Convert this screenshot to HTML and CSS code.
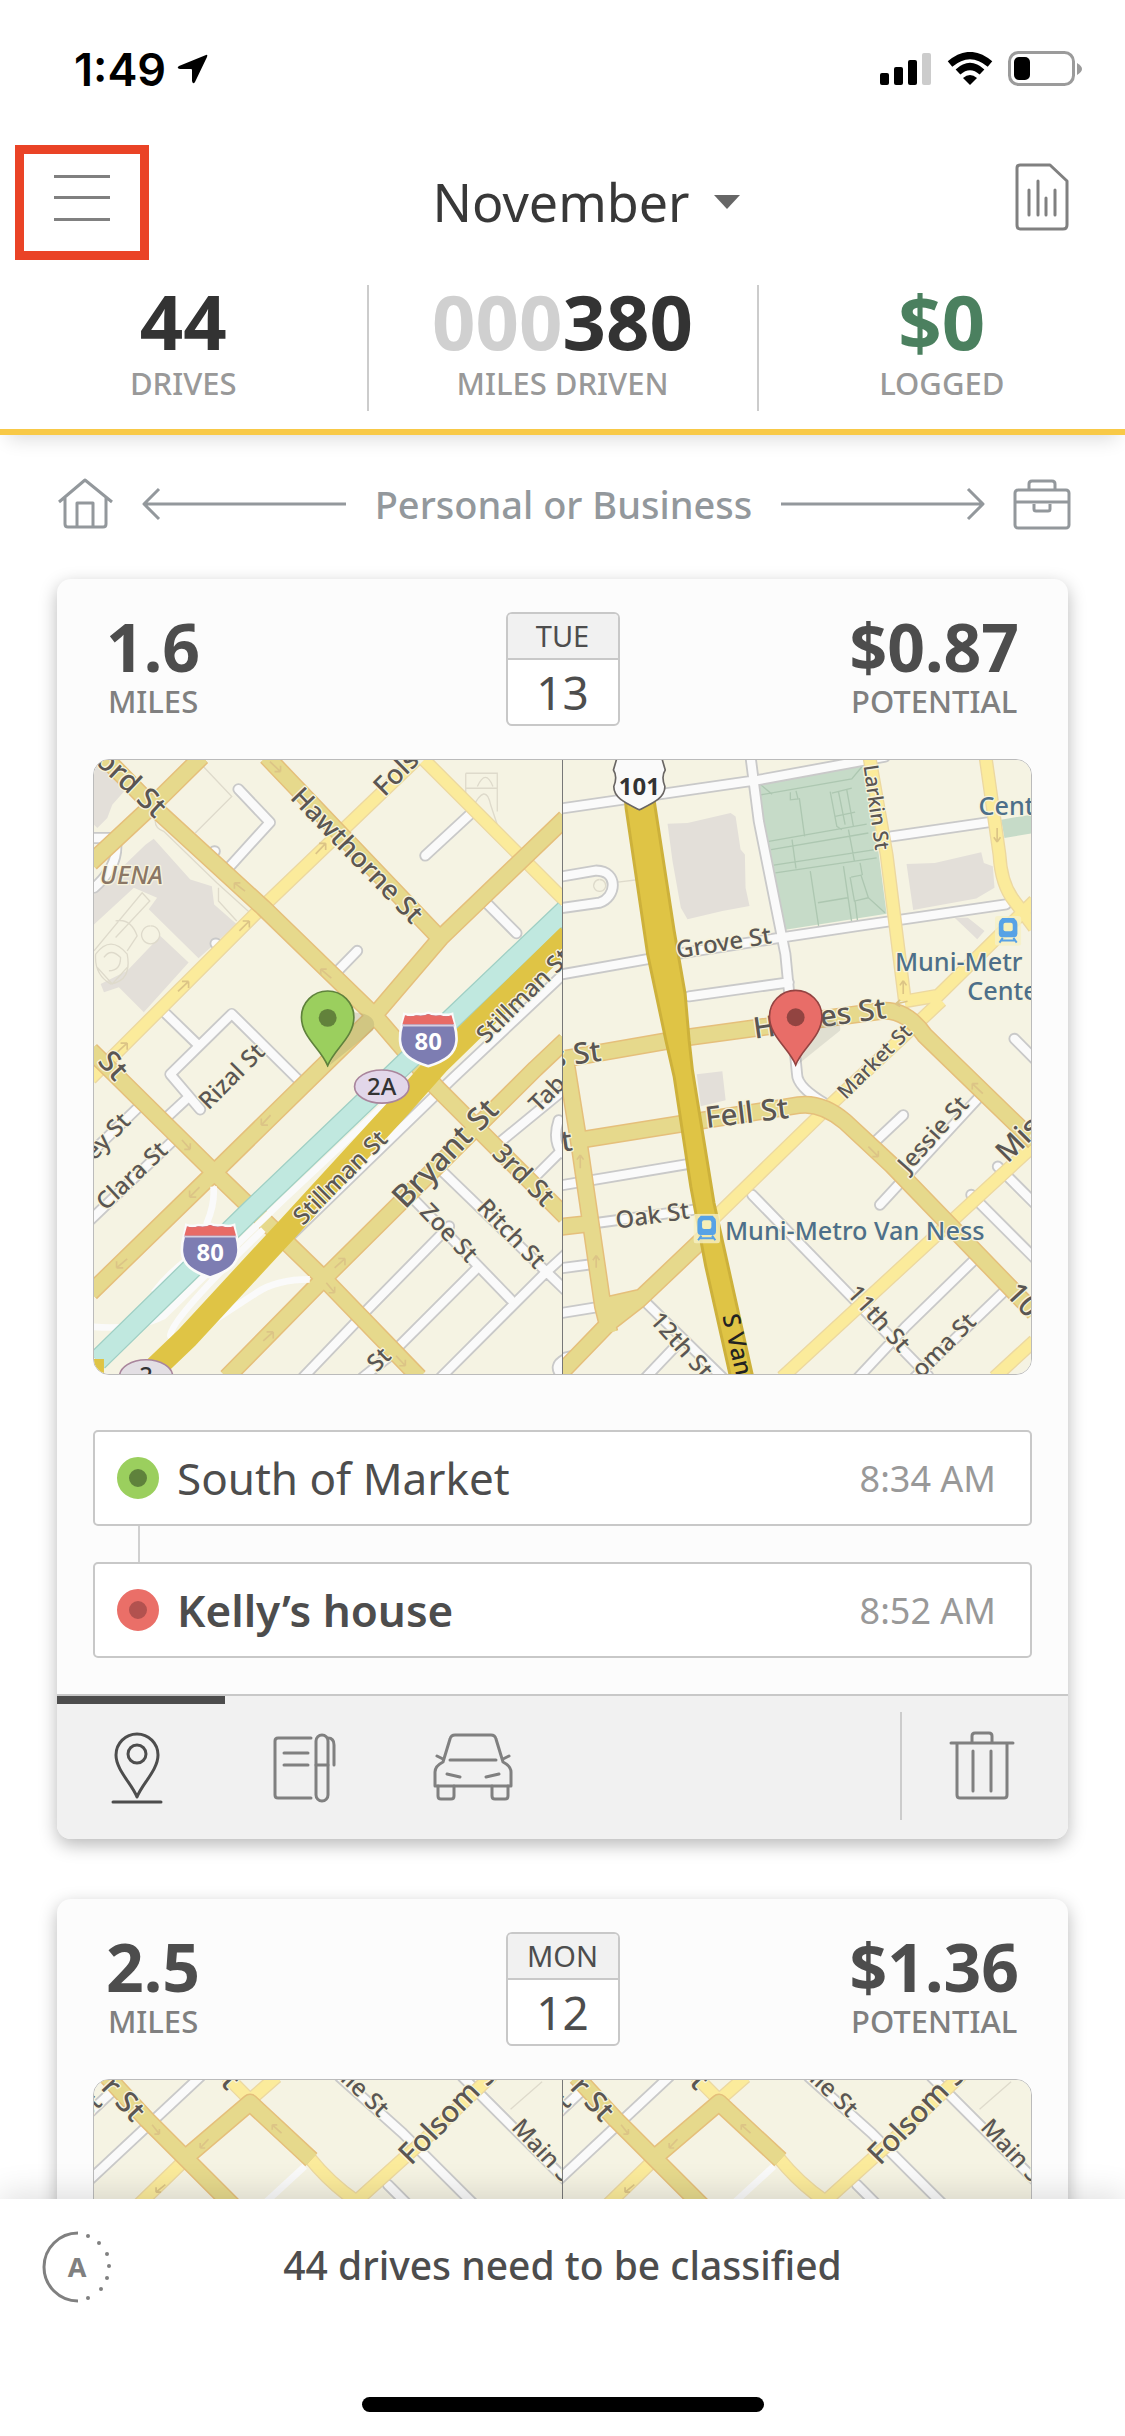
FILE: index.html
```html
<!DOCTYPE html>
<html lang="en">
<head>
    <meta charset="UTF-8">
    <meta name="viewport" content="width=device-width, initial-scale=1.0">
    <title>Drives - November</title>
    <link rel="stylesheet" href="styles.css">
</head>
<body>
    <!-- Shared map artwork -->
    <svg class="defs" aria-hidden="true">
        <defs>
            <symbol id="interstate" viewBox="0 0 180 170">
                <path d="M18 8 Q36 14 54 8 Q74 12 90 4 Q106 12 126 8 Q144 14 162 8 C166 40 178 56 175 90 C172 130 140 150 90 166 C40 150 8 130 5 90 C2 56 14 40 18 8Z" fill="#7d7db2" stroke="#fafafa" stroke-width="8"/>
                <path d="M20 12 Q36 18 54 12 Q74 16 90 8 Q106 16 126 12 Q144 18 160 12 L168 40 H12Z" fill="#e86b66"/>
                <path d="M11 43 H169" stroke="#d6cfe0" stroke-width="6"/>
                <text x="90" y="117" class="shield-text shield-white">80</text>
            </symbol>
            <symbol id="train" viewBox="0 0 80 90">
                <rect x="0" y="0" width="80" height="90" rx="10" fill="#f6f0c4" opacity="0.8"/>
                <path d="M22 6 H58 Q68 14 68 24 V52 Q68 64 58 64 H22 Q12 64 12 52 V24 Q12 14 22 6Z" fill="#57a2e6"/>
                <rect x="26" y="20" width="28" height="26" rx="6" fill="#f6efb8"/>
                <path d="M24 66 L14 80 M56 66 L66 80 M18 74 H62" stroke="#57a2e6" stroke-width="6"/>
            </symbol>
            <symbol id="map-pin" viewBox="0 0 170 236">
                <path d="M85 231 C65 180 6 145 6 85 A79 79 0 0 1 164 85 C164 145 105 180 85 231Z" stroke-width="5"/>
                <circle cx="85" cy="87" r="27" class="pin-dot"/>
            </symbol>

            <!-- Roads, each drawn twice: casing then fill -->
            <path id="start-minor" d="M445 103 L540 203 L420 335 M1008 303 L1150 172 M1195 448 L1283 537 M730 665 L803 590 M372 290 h2 M376 568 h2 M215 768 L318 868 M330 1068 L240 962 L425 780 L625 978 M290 1035 L220 1100 M150 1055 L0 1200 M250 1160 L0 1400 M1430 655 L1090 975 L600 1450 M1430 1005 L1235 1165 M1430 1180 L1345 1265 M1410 1100 Q1390 1160 1420 1200 M1060 1255 L1430 1612 M970 1335 L1265 1640 M1430 1505 L1370 1560 L1055 1875 M1160 1550 L920 1790 M1080 1420 L825 1680 M800 1708 L640 1875 M920 1795 L820 1875 M1430 1820 q-40 20 -10 50 M0 250 H75 Q90 330 10 400"/>
            <path id="start-street" d="M0 975 L515 460 L980 15 M1005 15 L1430 440"/>
            <path id="start-avenue" d="M335 5 L190 148 L0 325 M40 5 L190 158 L520 460 L860 790 L1040 1000 L1430 1390 M530 5 L1050 550 M1430 190 L1055 550 L850 790 L370 1260 L0 1620 M0 890 L370 1255 L700 1575 L990 1875 M1430 860 L1340 945 L700 1580 L410 1875"/>
            <path id="end-minor" d="M0 162 L600 75 L980 5 M575 5 L600 200 L680 600 L715 960 Q715 1000 800 1050 M0 367 L110 348 C180 350 170 430 120 445 L0 462 M0 662 L350 600 L680 548 L900 515 L1345 450 M390 727 L690 685 M1000 245 L1310 200 M1370 855 L1430 915 M1035 1085 L945 1170 M1260 1035 L965 1355 M0 1297 L400 1230 M110 1410 L440 1365 M0 1547 L90 1535 M0 1682 L105 1665 M580 1325 L1110 1870 M250 1640 L490 1875 M350 1780 L260 1875 M1245 1525 L1040 1725 L900 1875 M1335 1620 L1070 1875 M1240 1325 L1430 1515 M1320 1240 L1430 1350 M0 1820 L40 1810"/>
            <path id="end-street" d="M933 5 L985 300 L1040 740 M1283 5 L1325 300 Q1330 390 1370 440 L1430 520 M1430 440 L1140 725 L1040 742 M1150 740 L820 1050 L450 1410 M1430 1175 L670 1875 M1430 1765 L1310 1875"/>
            <path id="end-avenue" d="M0 918 L390 850 L960 772 Q1040 760 1100 845 L1430 1165 M15 900 L60 1180 L130 1660 L150 1740 M50 1162 L450 1098 L720 1055 Q790 1045 860 1105 L1000 1235 L1430 1680 M0 1865 L150 1710 L240 1640 L440 1450 M130 1660 L240 1635 M0 1422 L90 1412"/>
            <path id="folsom-minor" d="M330 20 L0 328 M750 20 L940 190 L1180 430 M1120 20 L1430 330 M895 345 L990 440 M0 125 L80 50"/>
            <path id="folsom-street" d="M410 20 L480 90 L560 20 M300 255 L130 420 M660 265 Q720 340 800 395 L1000 215 L1210 15"/>
            <path id="folsom-avenue" d="M50 20 L170 150 L430 410 M290 260 L480 98 L665 270"/>

            <g id="folsom">
                <path class="ground" d="M0 0H1430V1900H0Z"/>
                <path class="detail" d="M1360 35 L1265 118"/>
                <use href="#folsom-minor" class="minor"/>
                <use href="#folsom-minor" class="fill-minor"/>
                <path class="ramp" d="M645 290 L520 405"/>
                <use href="#folsom-street" class="street"/>
                <use href="#folsom-street" class="fill-street"/>
                <use href="#folsom-avenue" class="avenue"/>
                <use href="#folsom-avenue" class="fill-avenue"/>
                <path class="arrows" d="M185 165 L207 193 M207 193 v-15 M207 193 h-15 M355 208 L330 235 M330 235 v-15 M330 235 h15 M575 190 L547 165 M547 165 v15 M547 165 h15 M225 345 L197 368 M197 368 v-15 M197 368 h15"/>
                <g class="labels">
                    <text class="big" transform="translate(28 55) rotate(47)">r St</text>
                    <text class="big" transform="translate(388 40) rotate(47)">t</text>
                    <text transform="translate(750 30) rotate(44)">lie St</text>
                    <text class="big" transform="translate(965 290) rotate(-46)">Folsom S</text>
                    <text transform="translate(1265 175) rotate(47)">Main St</text>
                    <text transform="translate(-10 150) rotate(-45)">St</text>
                </g>
            </g>
        </defs>
    </svg>

    <div class="app">
        <header class="header">
            <div class="status-bar">
                <div class="clock">
                    <span>1:49</span>
                    <svg width="32" height="32" viewBox="0 0 32 32"><path d="M30 2 Q32 1 31 4 L19 29 Q17 32 16 28 V17 Q16 16 15 16 H4 Q0 15 3 13Z"/></svg>
                </div>
                <div class="status-icons">
                    <svg width="52" height="34" viewBox="0 0 52 34">
                        <rect x="0" y="21" width="9" height="12" rx="2"/>
                        <rect x="14" y="15" width="9" height="18" rx="2"/>
                        <rect x="28" y="8" width="9" height="25" rx="2"/>
                        <rect x="42" y="1" width="9" height="32" rx="2" fill="#cccccc"/>
                    </svg>
                    <svg width="46" height="34" viewBox="0 0 46 34">
                        <path d="M23 33 L16 26 Q23 20 30 26Z"/>
                        <path d="M11 20 Q23 9 35 20 M3 12 Q23 -5 43 12" fill="none" stroke="#000" stroke-width="7"/>
                    </svg>
                    <svg width="74" height="36" viewBox="0 0 74 36">
                        <rect x="1.5" y="1.5" width="64" height="32" rx="9" fill="none" stroke="#9b9b9b" stroke-width="3"/>
                        <rect x="6" y="6" width="16" height="23" rx="5"/>
                        <path d="M69 12 Q74 15 74 18 Q74 21 69 24Z" fill="#9b9b9b"/>
                    </svg>
                </div>
            </div>

            <div class="title-bar">
                <button class="menu-button" aria-label="Menu">
                    <svg width="56" height="46" viewBox="0 0 56 46"><path d="M0 1.5 H56 M0 22.5 H56 M0 44.5 H56" stroke="#808080" stroke-width="3"/></svg>
                </button>
                <button class="month-button">
                    November
                    <svg width="26" height="14" viewBox="0 0 26 14"><path d="M0 0 H26 L13 14Z" fill="#666666"/></svg>
                </button>
                <button class="report-button" aria-label="Report">
                    <svg width="54" height="68" viewBox="0 0 54 68" fill="none" stroke="#808080" stroke-width="3">
                        <path d="M5 2 H35 L52 18 V62 Q52 66 48 66 H5 Q2 66 2 62 V5 Q2 2 5 2Z" stroke-linejoin="round"/>
                        <path d="M14 27 V52 M23 18 V52 M31 35 V52 M40 27 V52" stroke-linecap="round"/>
                    </svg>
                </button>
            </div>

            <div class="stats">
                <div class="stat">
                    <div class="stat-value">44</div>
                    <div class="stat-label">DRIVES</div>
                </div>
                <div class="stat stat-miles">
                    <div class="stat-value"><span class="zeros">000</span>380</div>
                    <div class="stat-label">MILES DRIVEN</div>
                </div>
                <div class="stat">
                    <div class="stat-value logged">$0</div>
                    <div class="stat-label">LOGGED</div>
                </div>
            </div>
        </header>

        <main class="feed">
            <div class="swipe-hint">
                <svg width="57" height="52" viewBox="0 0 57 52">
                    <path d="M2 24 L28 2 L55 24 M8 20 V46 Q8 49 11 49 H46 Q49 49 49 46 V20 M20 49 V25 H36 V49"/>
                </svg>
                <svg width="205" height="34" viewBox="0 0 205 34"><path d="M17 2 L2 17 L17 32 M2 17 H204"/></svg>
                <span>Personal or Business</span>
                <svg width="205" height="34" viewBox="0 0 205 34"><path d="M188 2 L203 17 L188 32 M203 17 H1"/></svg>
                <svg width="58" height="52" viewBox="0 0 58 52">
                    <rect x="2" y="12" width="54" height="38" rx="3"/>
                    <path d="M16 12 V6 Q16 3 19 3 H39 Q42 3 42 6 V12 M3 24 H55 M21 26 V31 Q21 33 23 33 H35 Q37 33 37 31 V26"/>
                </svg>
            </div>

            <article class="card">
                <div class="card-body">
                    <div class="summary">
                        <div class="figure">
                            <div class="figure-value">1.6</div>
                            <div class="figure-label">MILES</div>
                        </div>
                        <div class="date">
                            <div class="weekday">TUE</div>
                            <div class="day">13</div>
                        </div>
                        <div class="figure figure-right">
                            <div class="figure-value">$0.87</div>
                            <div class="figure-label">POTENTIAL</div>
                        </div>
                    </div>

                    <div class="maps">
                        <svg class="map" viewBox="10 15 1410 1850">
                            <path class="ground" d="M0 0H1430V1880H0Z"/>
                            <path class="building" d="M0 20 L60 35 L105 105 L65 150 L50 190 L20 220 L0 200Z M0 430 L165 270 L190 252 L215 280 L300 375 L365 395 L372 450 L440 510 L325 612 L175 465 L200 430 L130 400 L0 520Z M210 545 L295 625 L160 775 L85 700 L40 715 L30 690 L110 650Z"/>
                            <path class="detail" d="M330 25 L425 125 L315 235 M195 190 Q190 220 220 230 L380 385 L480 475 M385 400 V440 L440 500 M1130 55 H1225 V170 M1130 55 V140 M1130 100 H1225 M1165 95 Q1190 40 1212 95 M1150 160 Q1190 80 1205 150 L1225 210 M10 590 L155 415 L178 440 L75 550 M75 500 Q120 490 140 545 L110 590 M15 600 Q60 540 110 600 Q125 680 60 690 Q10 660 15 600 M40 610 Q60 580 90 610 Q90 650 55 650 M20 640 L65 690 L110 640 M180 515 a27 27 0 1 0 1 0"/>
                            <use href="#start-minor" class="minor"/>
                            <use href="#start-minor" class="fill-minor"/>
                            <use href="#start-street" class="street"/>
                            <use href="#start-street" class="fill-street"/>
                            <use href="#start-avenue" class="avenue"/>
                            <use href="#start-avenue" class="fill-avenue"/>
                            <path class="ramp" d="M370 1300 Q375 1350 350 1410 L350 1480 Q250 1540 190 1620 M0 1722 Q130 1735 220 1690 L580 1340 L900 1040 M660 1580 Q560 1580 500 1620 L300 1750 Q250 1770 240 1750 Q240 1700 520 1430"/>
                            <path d="M1430 468 L930 945 L480 1375 L20 1825" fill="none" stroke="#9fcfc4" stroke-width="66"/>
                            <path d="M1430 468 L930 945 L480 1375 L20 1825" fill="none" stroke="#c0e8df" stroke-width="58"/>
                            <path d="M1440 545 L1045 930 L930 1060 L600 1420 L290 1755 L170 1870 M0 1855 H40" fill="none" stroke="#dfc445" stroke-width="70"/>
                            <path class="arrows" d="M678 298 L708 266 M708 266 h-20 M708 266 v20 M448 530 L478 500 M478 500 h-20 M478 500 v20 M263 712 L295 682 M295 682 h-20 M295 682 v20 M80 895 L110 868 M110 868 h-20 M110 868 v20 M465 410 L433 385 M433 385 h18 M433 385 v18 M725 672 L693 645 M693 645 h18 M693 645 v18 M540 20 L572 50 M572 50 h-18 M572 50 v-18 M542 1085 L514 1115 M514 1115 v-20 M514 1115 h20 M328 1302 L298 1332 M298 1332 v-20 M298 1332 h20 M110 1518 L78 1545 M78 1545 v-20 M78 1545 h20 M275 1160 L300 1188 M300 1188 v-18 M300 1188 h-18 M735 1545 L766 1517 M766 1517 h-20 M766 1517 v20 M520 1765 L550 1738 M550 1738 h-20 M550 1738 v20 M710 1590 L735 1620 M735 1620 v-18 M735 1620 h-18 M920 1810 L948 1840 M948 1840 v-18 M948 1840 h-18"/>
                            <path d="M720 935 L850 830 Q870 780 790 775Z" fill="#8a8460" opacity="0.22"/>
                            <g class="labels">
                                <text class="big" transform="translate(10 22) rotate(43)">ord St</text>
                                <text class="mid" transform="translate(598 130) rotate(46)">Hawthorne St</text>
                                <text class="mid" transform="translate(885 128) rotate(-45)">Folsom</text>
                                <text x="218" y="388" class="place" text-anchor="end">UENA</text>
                                <text class="big" transform="translate(18 925) rotate(48)">St</text>
                                <text transform="translate(355 1072) rotate(-45)">Rizal St</text>
                                <text transform="translate(10 1225) rotate(-46)">ey St</text>
                                <text transform="translate(45 1375) rotate(-43)">Clara St</text>
                                <text transform="translate(640 1420) rotate(-45)">Stillman St</text>
                                <text transform="translate(1192 872) rotate(-45)">Stillman St</text>
                                <text class="huge" transform="translate(948 1370) rotate(-46)">Bryant St</text>
                                <text class="mid" transform="translate(1205 1205) rotate(45)">3rd St</text>
                                <text transform="translate(1160 1366) rotate(46)">Ritch St</text>
                                <text transform="translate(988 1380) rotate(46)">Zoe St</text>
                                <text transform="translate(1350 1080) rotate(-45)">Tab</text>
                                <text transform="translate(862 1862) rotate(-45)">St</text>
                            </g>
                            <ellipse cx="877" cy="999" rx="82" ry="50" class="route"/>
                            <text x="877" y="1024" class="route-text">2A</text>
                            <ellipse cx="167" cy="1872" rx="80" ry="50" class="route route-gray"/>
                            <text x="167" y="1896" class="route-text">2</text>
                            <use href="#interstate" x="927" y="772" width="180" height="170"/>
                            <use href="#interstate" x="270" y="1408" width="180" height="170"/>
                            <use href="#map-pin" x="629" y="705" width="170" height="236" class="pin-start"/>
                        </svg>
                        <svg class="map" viewBox="10 15 1410 1850">
                            <path class="ground" d="M0 0H1430V1880H0Z"/>
                            <path class="building" d="M325 207 L385 205 L515 175 L530 185 L545 285 L558 300 L560 400 L572 455 L490 470 L385 495 L365 460 L340 320Z M1045 328 L1130 325 L1270 293 L1278 325 L1305 335 L1310 400 L1255 432 L1065 467Z M413 962 L490 953 L500 1040 L425 1058Z M1190 490 L1230 490 L1280 530 L1258 555Z"/>
                            <path class="park" d="M595 85 L925 25 L985 478 L675 527Z M1330 195 L1430 178 V235 L1340 250Z"/>
                            <path class="park-lines" d="M605 120 L880 72 L915 30 M600 85 L640 118 M695 112 V135 L718 132 L712 108 M722 130 L738 245 M815 110 L835 215 L850 225 M840 110 L860 210 M865 105 L885 215 M820 115 L880 100 M830 185 L890 172 M630 260 L925 208 M637 285 L930 235 M700 255 L712 342 M870 225 L888 320 M645 332 L950 285 M650 355 L955 310 M755 350 L780 515 M855 335 L880 505 M778 445 L868 430 M878 368 L908 362 L930 430 L980 475 M905 325 L912 362 M875 368 L888 440 L930 430 M890 440 L898 505"/>
                            <path class="detail" d="M175 383 L240 375 M120 375 a18 18 0 1 0 1 0"/>
                            <use href="#end-minor" class="minor"/>
                            <use href="#end-minor" class="fill-minor"/>
                            <use href="#end-street" class="street"/>
                            <use href="#end-street" class="fill-street"/>
                            <use href="#end-avenue" class="avenue"/>
                            <use href="#end-avenue" class="fill-avenue"/>
                            <path d="M190 5 L200 160 L265 600 L320 860 L345 970 L395 1300 L440 1540 L515 1875 H582 L525 1620 L465 1350 L400 950 L390 860 L378 720 L345 530 L285 140 L275 5Z" fill="#dfc445" stroke="#cdb13b" stroke-width="9"/>
                            <path class="arrows" d="M1318 220 V262 M1318 262 l-10 -14 M1318 262 l10 -14 M1035 720 V680 M1035 680 l-10 14 M1035 680 l10 14 M1048 742 L1012 750 M1012 750 l14 -12 M1012 750 l14 8 M62 1245 V1205 M62 1205 l-10 14 M62 1205 l10 14 M110 1545 V1508 M110 1508 l-10 14 M110 1508 l10 14 M930 1180 L960 1210 M960 1210 v-18 M960 1210 h-18 M1275 1020 L1243 990 M1243 990 v18 M1243 990 h18"/>
                            <g class="labels">
                                <text class="small" transform="translate(915 32) rotate(82)">Larkin St</text>
                                <text x="1262" y="180" class="poi">Cent</text>
                                <text transform="translate(355 612) rotate(-9)">Grove St</text>
                                <text class="big" transform="translate(588 855) rotate(-8)">H</text>
                                <text class="big" transform="translate(788 820) rotate(-8)">es St</text>
                                <text class="big" transform="translate(-20 942) rotate(-8)">s St</text>
                                <text class="small" transform="translate(862 1040) rotate(-45)">Market St</text>
                                <text class="big" transform="translate(442 1124) rotate(-7)">Fell St</text>
                                <text transform="translate(1050 1262) rotate(-48)">Jessie St</text>
                                <text class="big" transform="translate(1350 1232) rotate(-45)">Mis</text>
                                <text transform="translate(172 1427) rotate(-8)">Oak St</text>
                                <text transform="translate(863 1625) rotate(48)">11th St</text>
                                <text transform="translate(268 1705) rotate(48)">12th St</text>
                                <text transform="translate(1090 1880) rotate(-45)">oma St</text>
                                <text class="big" transform="translate(1340 1625) rotate(47)">10</text>
                                <text class="dark" transform="translate(490 1690) rotate(77)">S Van</text>
                                <text class="big" transform="translate(8 1195) rotate(-8)">t</text>
                                <text x="1010" y="652" class="poi">Muni-Metr</text>
                                <text x="1228" y="737" class="poi">Cente</text>
                                <text x="498" y="1461" class="poi">Muni-Metro Van Ness</text>
                            </g>
                            <use href="#train" x="1311" y="485" width="80" height="90"/>
                            <use href="#train" x="403" y="1382" width="80" height="90"/>
                            <path d="M175 0 L162 45 Q175 65 163 95 C163 130 200 145 240 165 C280 145 317 130 317 95 Q305 65 318 45 L305 0Z" fill="#fafafa" stroke="#6a6664" stroke-width="5"/>
                            <text x="240" y="119" class="shield-text">101</text>
                            <path d="M715 935 L845 830 Q850 790 790 800Z" fill="#777" opacity="0.16"/>
                            <use href="#map-pin" x="626" y="703" width="170" height="236" class="pin-end"/>
                        </svg>
                    </div>

                    <div class="stops">
                        <div class="stop">
                            <span class="dot dot-start"></span>
                            <span class="stop-name">South of Market</span>
                            <time class="stop-time">8:34 AM</time>
                        </div>
                        <div class="connector"></div>
                        <div class="stop">
                            <span class="dot dot-end"></span>
                            <span class="stop-name named">Kelly’s house</span>
                            <time class="stop-time">8:52 AM</time>
                        </div>
                    </div>
                </div>

                <div class="toolbar">
                    <button class="tool active" aria-label="Places">
                        <svg width="54" height="72" viewBox="0 0 54 72">
                            <path d="M27 65 C22 52 6 38 6 23 A21 21 0 0 1 48 23 C48 38 32 52 27 65Z"/>
                            <circle cx="27" cy="22" r="9"/>
                            <path d="M3 70 H51"/>
                        </svg>
                    </button>
                    <button class="tool" aria-label="Notes">
                        <svg width="64" height="72" viewBox="0 0 64 72">
                            <path d="M38 6 H5 Q2 6 2 9 V63 Q2 66 5 66 H38 M11 21 H35 M11 33 H35"/>
                            <rect x="43" y="3" width="12" height="66" rx="6"/>
                            <path d="M43 33 H55 M55 6 Q61 6 61 13 V33"/>
                        </svg>
                    </button>
                    <button class="tool" aria-label="Vehicle">
                        <svg width="80" height="72" viewBox="0 0 80 72">
                            <path d="M17 28 H63 M10 30 L17 7 Q18 3 22 3 H58 Q62 3 63 7 L70 30 Q78 34 78 40 V54 H2 V40 Q2 34 10 30Z"/>
                            <path d="M4 24 L10 27 M76 24 L70 27 M14 42 L27 45 M66 42 L53 45 M5 54 V64 Q5 67 8 67 H18 Q21 67 21 64 V54 M59 54 V64 Q59 67 62 67 H72 Q75 67 75 64 V54"/>
                        </svg>
                    </button>
                    <button class="tool delete" aria-label="Delete">
                        <svg width="66" height="72" viewBox="0 0 66 72">
                            <path d="M2 13 H64 M23 12 V6 Q23 3 26 3 H40 Q43 3 43 6 V12 M8 14 V65 Q8 68 11 68 H55 Q58 68 58 65 V14 M24 21 V61 M42 21 V61"/>
                        </svg>
                    </button>
                </div>
            </article>

            <article class="card">
                <div class="card-body">
                    <div class="summary">
                        <div class="figure">
                            <div class="figure-value">2.5</div>
                            <div class="figure-label">MILES</div>
                        </div>
                        <div class="date">
                            <div class="weekday">MON</div>
                            <div class="day">12</div>
                        </div>
                        <div class="figure figure-right">
                            <div class="figure-value">$1.36</div>
                            <div class="figure-label">POTENTIAL</div>
                        </div>
                    </div>
                    <div class="maps">
                        <svg class="map" viewBox="10 30 1410 1850"><use href="#folsom"/></svg>
                        <svg class="map" viewBox="10 30 1410 1850"><use href="#folsom"/></svg>
                    </div>
                </div>
            </article>
        </main>

        <footer class="footer">
            <div class="footer-row">
                <button class="auto-button" aria-label="Auto classify">
                    <svg width="72" height="72" viewBox="0 0 72 72">
                        <path d="M36 2 A34 34 0 0 0 36 70" fill="none" stroke="#808080" stroke-width="3"/>
                        <g fill="#808080">
                            <circle cx="46" cy="5" r="2"/><circle cx="57" cy="12" r="2"/><circle cx="65" cy="23" r="2"/><circle cx="67" cy="35" r="2"/>
                            <circle cx="65" cy="47" r="2"/><circle cx="59" cy="58" r="2"/><circle cx="46" cy="67" r="2"/>
                        </g>
                        <text x="35" y="46" text-anchor="middle" class="auto-letter">A</text>
                    </svg>
                </button>
                <p class="footer-message">44 drives need to be classified</p>
            </div>
            <div class="home-indicator"></div>
        </footer>
    </div>
</body>
</html>
```
FILE: styles.css
```css
* {
    margin: 0;
    padding: 0;
    box-sizing: border-box;
}

body {
    background: #fff;
    color: #4d4d4d;
    font-family: 'Noto Sans', sans-serif;
}

button {
    background: none;
    border: none;
    font: inherit;
    color: inherit;
    cursor: pointer;
}

svg {
    display: block;
    flex-shrink: 0;
}

.defs {
    position: absolute;
    width: 0;
    height: 0;
}

.app {
    display: flex;
    flex-direction: column;
    height: 100vh;
    overflow: hidden;
}

/* Header */
.header {
    position: relative;
    z-index: 2;
    background: #fff;
    border-bottom: 6px solid #f8c947;
    box-shadow: 0 12px 18px -8px rgba(0,0,0,0.14);
}

.status-bar {
    display: flex;
    justify-content: space-between;
    align-items: center;
    height: 138px;
    padding: 0 43px 0 74px;
}

.clock {
    display: flex;
    align-items: center;
    gap: 10px;
    font-family: Inter, sans-serif;
    font-size: 45px;
    font-weight: 600;
    color: #000;
}

.status-icons {
    display: flex;
    align-items: center;
    gap: 15px;
}

.title-bar {
    display: grid;
    grid-template-columns: 1fr auto 1fr;
    align-items: center;
    height: 128px;
    padding: 0 56px 0 15px;
}

.menu-button {
    justify-self: start;
    padding: 21px 30px 30px;
    border: 9px solid #ea4326;
}

.month-button {
    display: flex;
    align-items: center;
    gap: 24px;
    margin-left: 88px;
    font-size: 52px;
    line-height: 70px;
    color: #383838;
}

.report-button {
    justify-self: end;
    padding-bottom: 10px;
}

.stats {
    display: flex;
    padding: 19px 0 18px;
}

.stat {
    flex: 1;
    height: 126px;
    text-align: center;
}

.stat-miles {
    flex: 0 0 392px;
    border-left: 2px solid #ccc;
    border-right: 2px solid #ccc;
}

.stat-value {
    font-size: 76px;
    line-height: 72px;
    font-weight: 700;
    color: #333;
}

.zeros {
    color: #d0d0d0;
}

.logged {
    color: #4b805f;
}

.stat-label {
    margin-top: 5px;
    font-size: 31px;
    line-height: 42px;
    font-weight: 500;
    color: #999;
}

/* Feed */
.feed {
    flex: 1;
    min-height: 0;
    overflow: hidden;
    padding: 0 54px 0 57px;
}

.swipe-hint {
    display: flex;
    align-items: center;
    justify-content: space-between;
    padding: 42px 0 48px;
    font-size: 38px;
    line-height: 54px;
    font-weight: 500;
    color: #93989c;
}

.swipe-hint svg {
    fill: none;
    stroke: #93989c;
    stroke-width: 3;
    stroke-linejoin: round;
}

.card {
    margin: 0 3px 60px 0;
    background: #fcfcfc;
    border-radius: 14px;
    box-shadow: 0 6px 18px rgba(0,0,0,0.28);
}

.card-body {
    padding: 33px 36px 36px;
}

.summary {
    display: grid;
    grid-template-columns: 1fr auto 1fr;
    padding: 0 13px;
}

.figure {
    justify-self: start;
    text-align: center;
}

.figure-right {
    justify-self: end;
}

.figure-value {
    padding-top: 4px;
    font-size: 66px;
    line-height: 60px;
    font-weight: 700;
}

.figure-label {
    margin-top: 5px;
    font-size: 31px;
    line-height: 40px;
    font-weight: 500;
    color: #808080;
}

.date {
    width: 114px;
    height: 114px;
    border: 2px solid #c8c8c8;
    border-radius: 6px;
    background: #fff;
    text-align: center;
    overflow: hidden;
}

.weekday {
    border-bottom: 2px solid #c8c8c8;
    background: #f1f1f1;
    font-size: 29px;
    line-height: 44px;
}

.day {
    font-size: 46px;
    line-height: 64px;
}

/* Maps */
.maps {
    display: flex;
    margin-top: 33px;
    border: 1px solid #bbb;
    border-radius: 16px;
    overflow: hidden;
}

.map {
    flex: 1 1 0;
    width: 0;
    overflow: hidden;
}

.map + .map {
    border-left: 1px solid #777;
}

.ground { fill: #f5f3e3; }
.building { fill: #e3dfd9; }
.park { fill: #c6dbc8; }

.park-lines {
    fill: none;
    stroke: #adc7b1;
    stroke-width: 4;
}

.detail {
    fill: none;
    stroke: #dedacb;
    stroke-width: 4;
}

.minor, .street, .avenue, .fill-minor, .fill-street, .fill-avenue, .ramp {
    fill: none;
    stroke-linejoin: round;
}

.minor {
    stroke: #c9c9c9;
    stroke-width: 36;
    stroke-linecap: round;
}

.fill-minor {
    stroke: #fafafa;
    stroke-width: 25;
    stroke-linecap: round;
}

.street {
    stroke: #ecd8a0;
    stroke-width: 42;
}

.fill-street {
    stroke: #fbeb9b;
    stroke-width: 34;
}

.avenue {
    stroke: #e5bf7b;
    stroke-width: 54;
}

.fill-avenue {
    stroke: #e6d98c;
    stroke-width: 45;
}

.ramp {
    stroke: #fafafa;
    stroke-width: 20;
}

.arrows {
    fill: none;
    stroke: #dcc486;
    stroke-width: 5;
}

.labels text {
    font-size: 72px;
    font-weight: 500;
    fill: #5a5653;
    stroke: #f7f3dc;
    stroke-width: 8;
    stroke-linejoin: round;
    paint-order: stroke;
}

.labels .small { font-size: 62px; }
.labels .mid { font-size: 81px; }
.labels .big { font-size: 89px; }
.labels .huge { font-size: 94px; }

.labels .place {
    font-size: 76px;
    font-style: italic;
    fill: #8b7765;
}

.labels .poi {
    font-size: 76px;
    fill: #4d6f8a;
}

.labels .dark {
    fill: #222;
    stroke: none;
}

.shield-text, .route-text {
    font-size: 72px;
    font-weight: 700;
    text-anchor: middle;
    fill: #333;
}

.shield-text {
    font-family: 'Open Sans', sans-serif;
}

.shield-white {
    fill: #fff;
}

.route {
    fill: #e2d7ea;
    stroke: #a9859c;
    stroke-width: 5;
}

.route-gray {
    fill: #e3dfe4;
}

.route-text {
    font-weight: 500;
}

.pin-start {
    fill: #9bcf5e;
    stroke: #5f823c;
}

.pin-end {
    fill: #e86d68;
    stroke: #934442;
}

.pin-dot {
    stroke: none;
    fill: #000;
    fill-opacity: 0.37;
}

/* Stops */
.stops {
    margin-top: 55px;
}

.stop {
    display: flex;
    align-items: center;
    height: 96px;
    padding: 0 34px 0 22px;
    border: 2px solid #c8c8c8;
    border-radius: 5px;
    background: #fff;
}

.dot {
    width: 42px;
    height: 42px;
    border: 12px solid;
    border-radius: 50%;
}

.dot-start {
    border-color: #9bcf5e;
    background: #5f823c;
}

.dot-end {
    border-color: #ea6f68;
    background: #b2524f;
}

.stop-name {
    flex: 1;
    margin-left: 18px;
    font-size: 44px;
    line-height: 60px;
}

.named {
    font-weight: 600;
}

.stop-time {
    font-size: 36px;
    color: #999;
}

.connector {
    width: 2px;
    height: 36px;
    margin-left: 45px;
    background: #d0d0d0;
}

/* Toolbar */
.toolbar {
    display: flex;
    height: 145px;
    border-top: 2px solid #c8c8c8;
    border-radius: 0 0 14px 14px;
    background: #f1f1f1;
}

.tool {
    display: flex;
    align-items: center;
    justify-content: center;
    width: 168px;
    border-top: 8px solid transparent;
    padding: 0 8px 8px 0;
}

.tool svg {
    fill: none;
    stroke: #808080;
    stroke-width: 3;
    stroke-linecap: round;
    stroke-linejoin: round;
}

.active {
    border-top-color: #4d4d4d;
}

.active svg {
    stroke: #4d4d4d;
}

.delete {
    height: 108px;
    margin: 16px 0 0 auto;
    padding: 0 6px 0 0;
    border-top: none;
    border-left: 2px solid #ccc;
}

/* Footer */
.footer {
    position: relative;
    z-index: 2;
    background: #fff;
    box-shadow: 0 -6px 30px rgba(0,0,0,0.12);
    padding: 32px 0 24px;
}

.footer-row {
    display: grid;
    grid-template-columns: 72px 1fr 72px;
    align-items: center;
    padding: 0 42px;
}

.auto-letter {
    font-size: 27px;
    font-weight: 700;
    fill: #808080;
}

.footer-message {
    text-align: center;
    font-size: 39px;
    line-height: 54px;
    font-weight: 500;
    padding-bottom: 4px;
}

.home-indicator {
    width: 402px;
    height: 15px;
    margin: 94px auto 0;
    border-radius: 8px;
    background: #000;
}
```
